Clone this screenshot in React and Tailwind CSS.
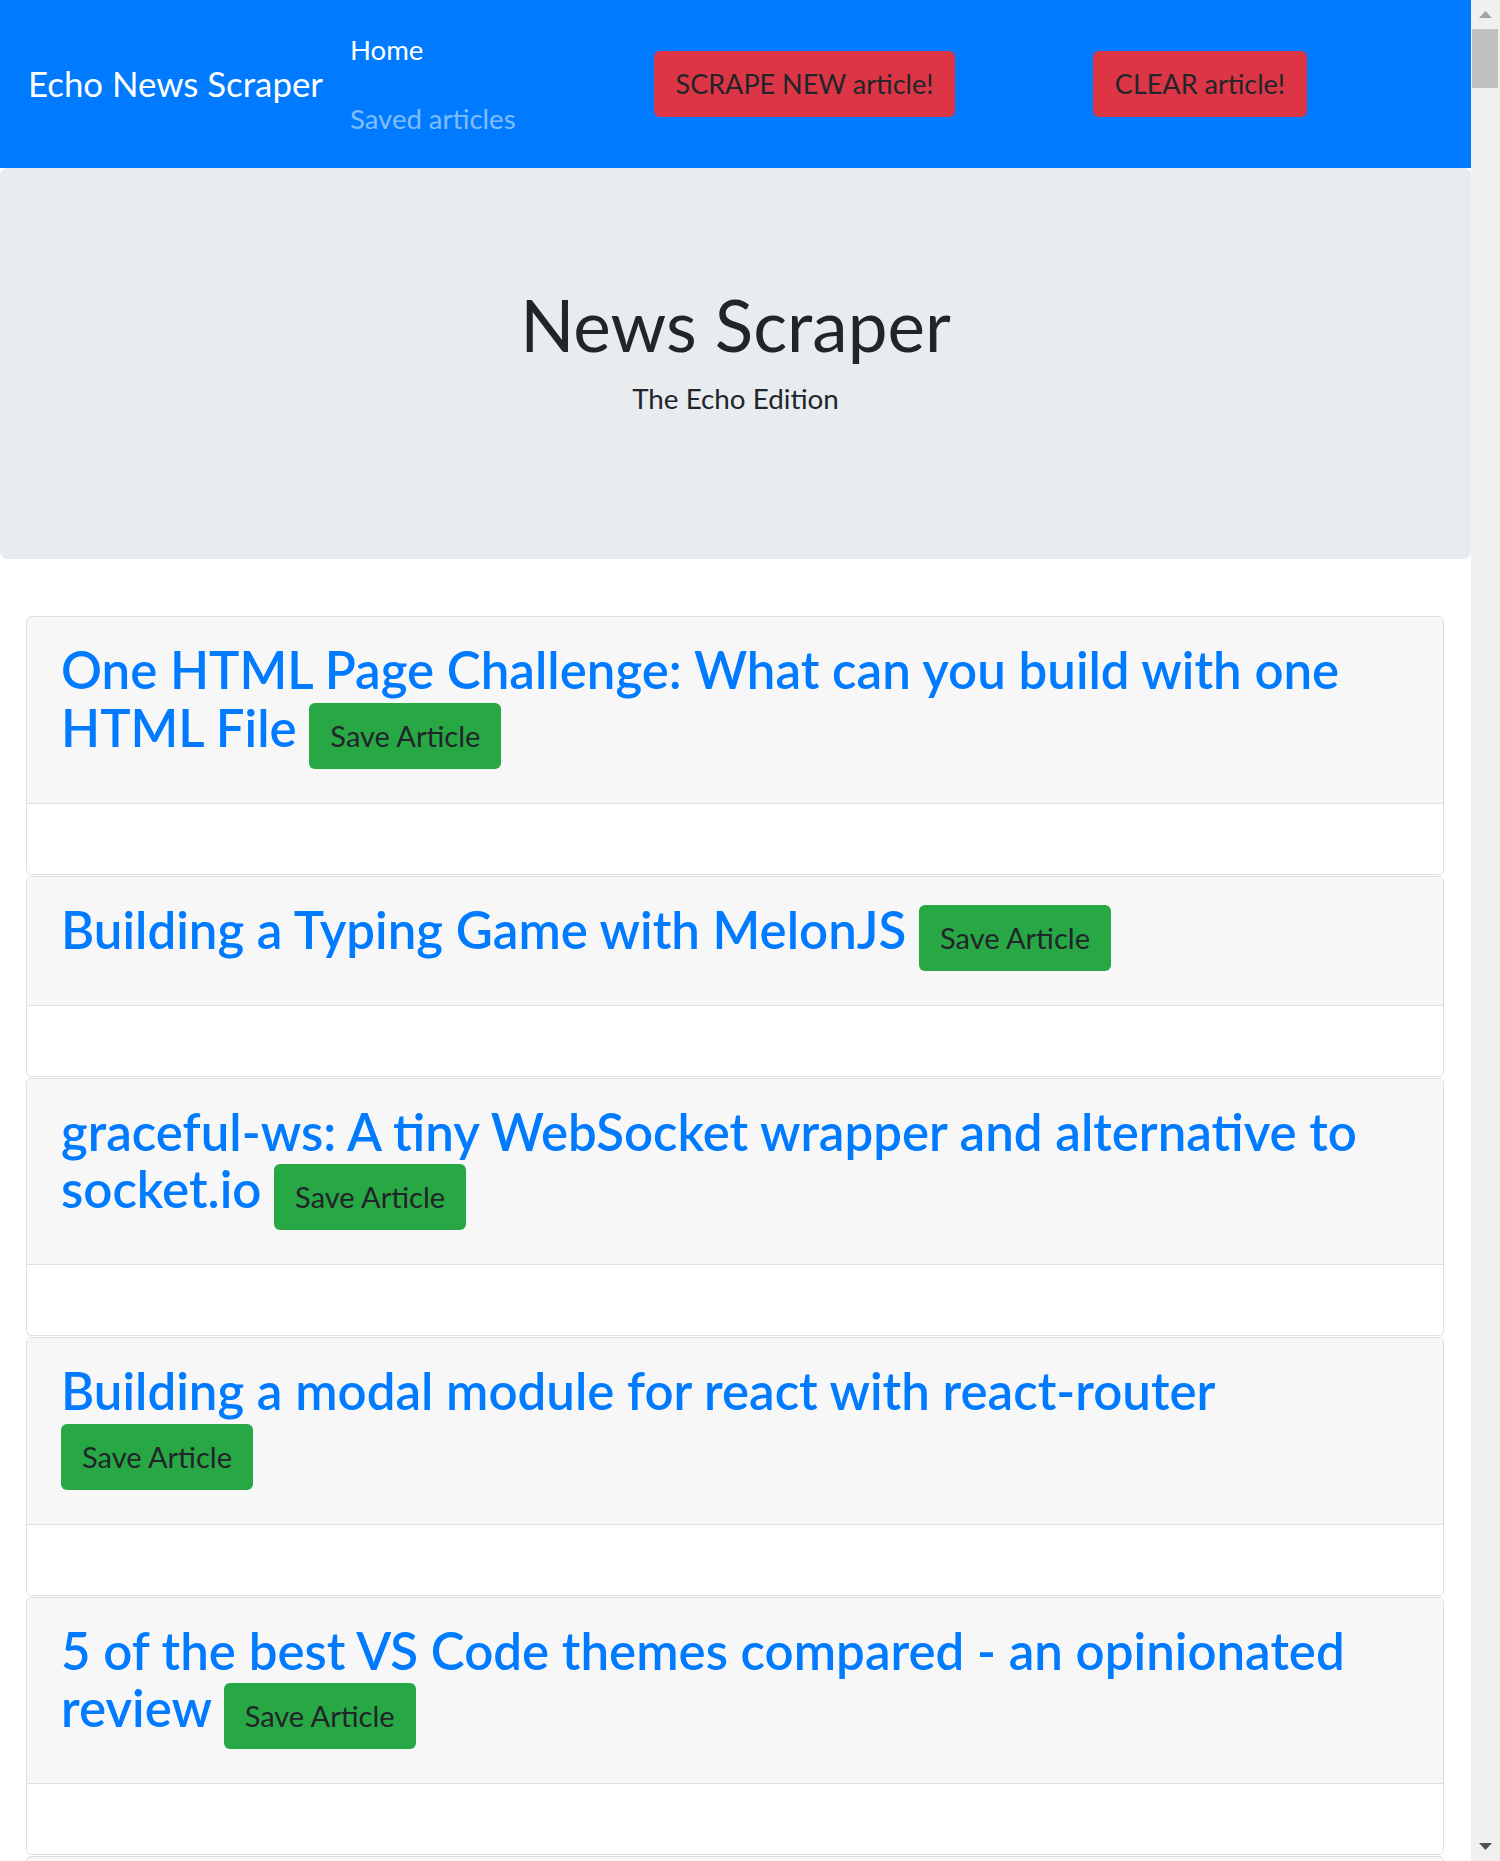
import React from 'react';

const articles = [
    { id: 1, title: 'One HTML Page Challenge: What can you build with one HTML File' },
    { id: 2, title: 'Building a Typing Game with MelonJS' },
    { id: 3, title: 'graceful-ws: A tiny WebSocket wrapper and alternative to socket.io' },
    { id: 4, title: 'Building a modal module for react with react-router' },
    { id: 5, title: '5 of the best VS Code themes compared - an opinionated review' },
];

function ArticleCard({ title }) {
    return (
        <div className='border border-[#dfdfdf] rounded-[5px] bg-white overflow-hidden'>
            <div className='bg-[#f7f7f7] border-b border-[#dfdfdf] pl-[34px] pr-[40px] pt-[24px] pb-[34px]'>
                <h1 className='text-[51px] leading-[57.6px] font-semibold text-[#007bff]'>
                    {title}{' '}
                    <button type='button' className='inline-block align-baseline bg-[#28a745] text-[#212529] text-[29px] leading-[42px] font-normal px-[21px] py-[12px] rounded-[6px]'>
                        Save Article
                    </button>
                </h1>
            </div>
            <div className='h-[70px]'></div>
        </div>
    );
}

function Scrollbar() {
    return (
        <div className='w-[29px] shrink-0 h-full bg-[#f0f0f0] flex flex-col'>
            <div className='h-[29px] flex items-center justify-center'>
                <svg width='13' height='7' viewBox='0 0 13 7'><path d='M6.5 0 L13 7 L0 7 Z' fill='#a3a3a3' /></svg>
            </div>
            <div className='h-[59px] ml-[1px] mr-[2px] bg-[#c1c1c1]'></div>
            <div className='flex-1'></div>
            <div className='h-[29px] flex items-center justify-center'>
                <svg width='13' height='7' viewBox='0 0 13 7'><path d='M0 0 L13 0 L6.5 7 Z' fill='#505050' /></svg>
            </div>
        </div>
    );
}

function App() {
    return (
        <div className='flex h-[1861px] w-[1500px] overflow-hidden bg-white' style={{ fontFamily: 'Lato, "Noto Sans", sans-serif' }}>
            <div className='flex-1 flex flex-col min-w-0'>
                {/* navbar */}
                <nav className='h-[168px] shrink-0 bg-[#007bff] flex items-center pl-[28px]'>
                    <span className='w-[322px] shrink-0 text-white text-[34.8px] leading-[50px] whitespace-nowrap'>Echo News Scraper</span>
                    <div className='w-[167px] shrink-0 flex flex-col gap-[33px]'>
                        <a className='text-white text-[27.5px] leading-[36px] whitespace-nowrap'>Home</a>
                        <a className='text-white/50 text-[27.5px] leading-[36px] whitespace-nowrap'>Saved articles</a>
                    </div>
                    <button type='button' className='ml-[137px] w-[301px] shrink-0 text-center bg-[#dc3545] text-[#212529] text-[27px] leading-[42px] py-[12px] rounded-[6px] whitespace-nowrap'>
                        SCRAPE NEW article!
                    </button>
                    <button type='button' className='ml-[138px] w-[214px] shrink-0 text-center bg-[#dc3545] text-[#212529] text-[27px] leading-[42px] py-[12px] rounded-[6px] whitespace-nowrap'>
                        CLEAR article!
                    </button>
                </nav>

                {/* jumbotron */}
                <div className='bg-white shrink-0'>
                    <div className='h-[391px] bg-[#e9ecef] rounded-[8px] flex flex-col items-center pt-[115px]'>
                        <h1 className='text-[71px] leading-[84px] text-[#212529] font-normal'>News Scraper</h1>
                        <p className='text-[27.8px] leading-[40px] text-[#212529] mt-[12px]'>The Echo Edition</p>
                    </div>
                </div>

                {/* articles */}
                <div className='flex flex-col gap-[1px] pl-[26px] pr-[27px] pt-[57px]'>
                    {articles.map((item) => (
                        <ArticleCard key={item.id} title={item.title} />
                    ))}
                    <div className='border border-[#dfdfdf] rounded-[5px] bg-[#f7f7f7] h-[200px]'></div>
                </div>
            </div>
            <Scrollbar />
        </div>
    );
}

export default App;
